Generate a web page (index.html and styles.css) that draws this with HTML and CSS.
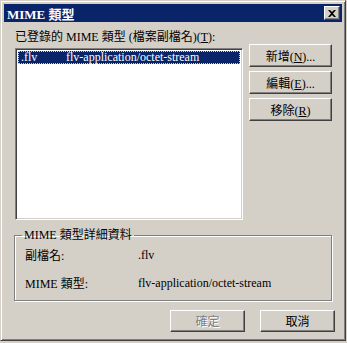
FILE: index.html
```html
<!DOCTYPE html>
<html lang="zh-Hant">
<head>
  <meta charset="UTF-8" />
  <title>MIME 類型</title>
  <link rel="stylesheet" href="styles.css">
</head>
<body>
  <div class="window">

    <!-- Caption -->
    <div class="titlebar">
      <span class="title">MIME 類型</span>
      <span class="close-btn">
        <svg width="8" height="7" viewBox="0 0 8 7">
          <path d="M0 0h2l2 2 2-2h2L5 3.5 8 7H6L4 5 2 7H0l3-3.5z" fill="#000"/>
        </svg>
      </span>
    </div>

    <div class="content">
      <div class="main-row">
        <div class="list-col">
          <div class="list-label">已登錄的 MIME 類型 (檔案副檔名)(<u>T</u>):</div>
          <div class="listbox">
            <div class="list-item selected">
              <span class="ext">.flv</span>
              <span class="mime">flv-application/octet-stream</span>
            </div>
          </div>
        </div>
        <div class="side-buttons">
          <button class="btn">新增(<u>N</u>)...</button>
          <button class="btn">編輯(<u>E</u>)...</button>
          <button class="btn">移除(<u>R</u>)</button>
        </div>
      </div>

      <fieldset class="group">
        <legend>MIME 類型詳細資料</legend>
        <div class="field">
          <span class="field-label">副檔名:</span>
          <span class="field-value">.flv</span>
        </div>
        <div class="field">
          <span class="field-label">MIME 類型:</span>
          <span class="field-value">flv-application/octet-stream</span>
        </div>
      </fieldset>

      <div class="footer">
        <button class="btn btn-wide disabled">確定</button>
        <button class="btn btn-wide">取消</button>
      </div>
    </div>

  </div>
</body>
</html>
```

FILE: styles.css
```css
/* — Base — */
* { box-sizing: border-box; margin: 0; padding: 0; }
body {
  font-family: "Liberation Serif", "Noto Sans CJK TC", serif;
  font-size: 12px;
  color: #000;
  background: #d4d0c8;
}
u { text-decoration: underline; }

/* — Window frame — */
.window {
  width: 346px; height: 341px;
  background: #d4d0c8;
  border: 1px solid;
  border-color: #d4d0c8 #404040 #404040 #d4d0c8;
  box-shadow: inset 1px 1px #fff, inset -1px -1px #808080;
  padding: 3px;
}

/* — Caption — */
.titlebar {
  height: 18px;
  background: #0a246a;
  display: flex; align-items: center; justify-content: space-between;
  padding: 0 2px 0 3px;
}
.title {
  color: #fff; font-weight: bold; font-size: 13px;
  font-family: "Liberation Serif", "Noto Sans CJK TC", serif;
}
.close-btn {
  width: 16px; height: 14px;
  background: #d4d0c8;
  border: 1px solid;
  border-color: #fff #404040 #404040 #fff;
  box-shadow: inset -1px -1px #808080;
  display: flex; align-items: center; justify-content: center;
}

/* — Content — */
.content { padding: 8px 0 0 11px; }
.main-row { display: flex; }
.list-label { line-height: 14px; height: 14px; margin-bottom: 4px; }
.listbox {
  width: 228px; height: 172px;
  background: #fff;
  border: 1px solid;
  border-color: #808080 #fff #fff #808080;
  box-shadow: inset 1px 1px #404040, inset -1px -1px #d4d0c8;
  padding: 2px;
}
.list-item {
  display: flex; height: 13px; line-height: 12px;
  padding-left: 3px;
}
.list-item.selected {
  background: #0a246a; color: #fff;
  outline: 1px dotted #d4d0c8; outline-offset: -1px;
}
.ext { width: 45px; }

.side-buttons {
  display: flex; flex-direction: column; gap: 4px;
  margin: 14px 0 0 6px;
}

/* — Buttons — */
.btn {
  width: 83px; height: 23px;
  background: #d4d0c8;
  font-family: "Liberation Serif", "Noto Sans CJK TC", serif;
  font-size: 12px; color: #000;
  border: 1px solid;
  border-color: #fff #404040 #404040 #fff;
  box-shadow: inset -1px -1px #808080;
}
.btn-wide { width: 75px; height: 22px; }
.btn.disabled { color: #808080; text-shadow: 1px 1px #fff; }

/* — Details group — */
.group {
  width: 318px; height: 72px;
  margin: 9px 0 0 -1px;
  border: 1px solid #808080;
  box-shadow: inset 1px 1px #fff, 1px 1px #fff;
  padding: 0 10px;
}
.group legend {
  padding: 0 2px; margin-left: -3px;
  line-height: 12px;
}
.field { display: flex; height: 28px; align-items: center; }
.field-label { width: 113px; }

/* — Footer — */
.footer {
  display: flex; gap: 15px;
  margin: 9px 0 0 155px;
}
```
